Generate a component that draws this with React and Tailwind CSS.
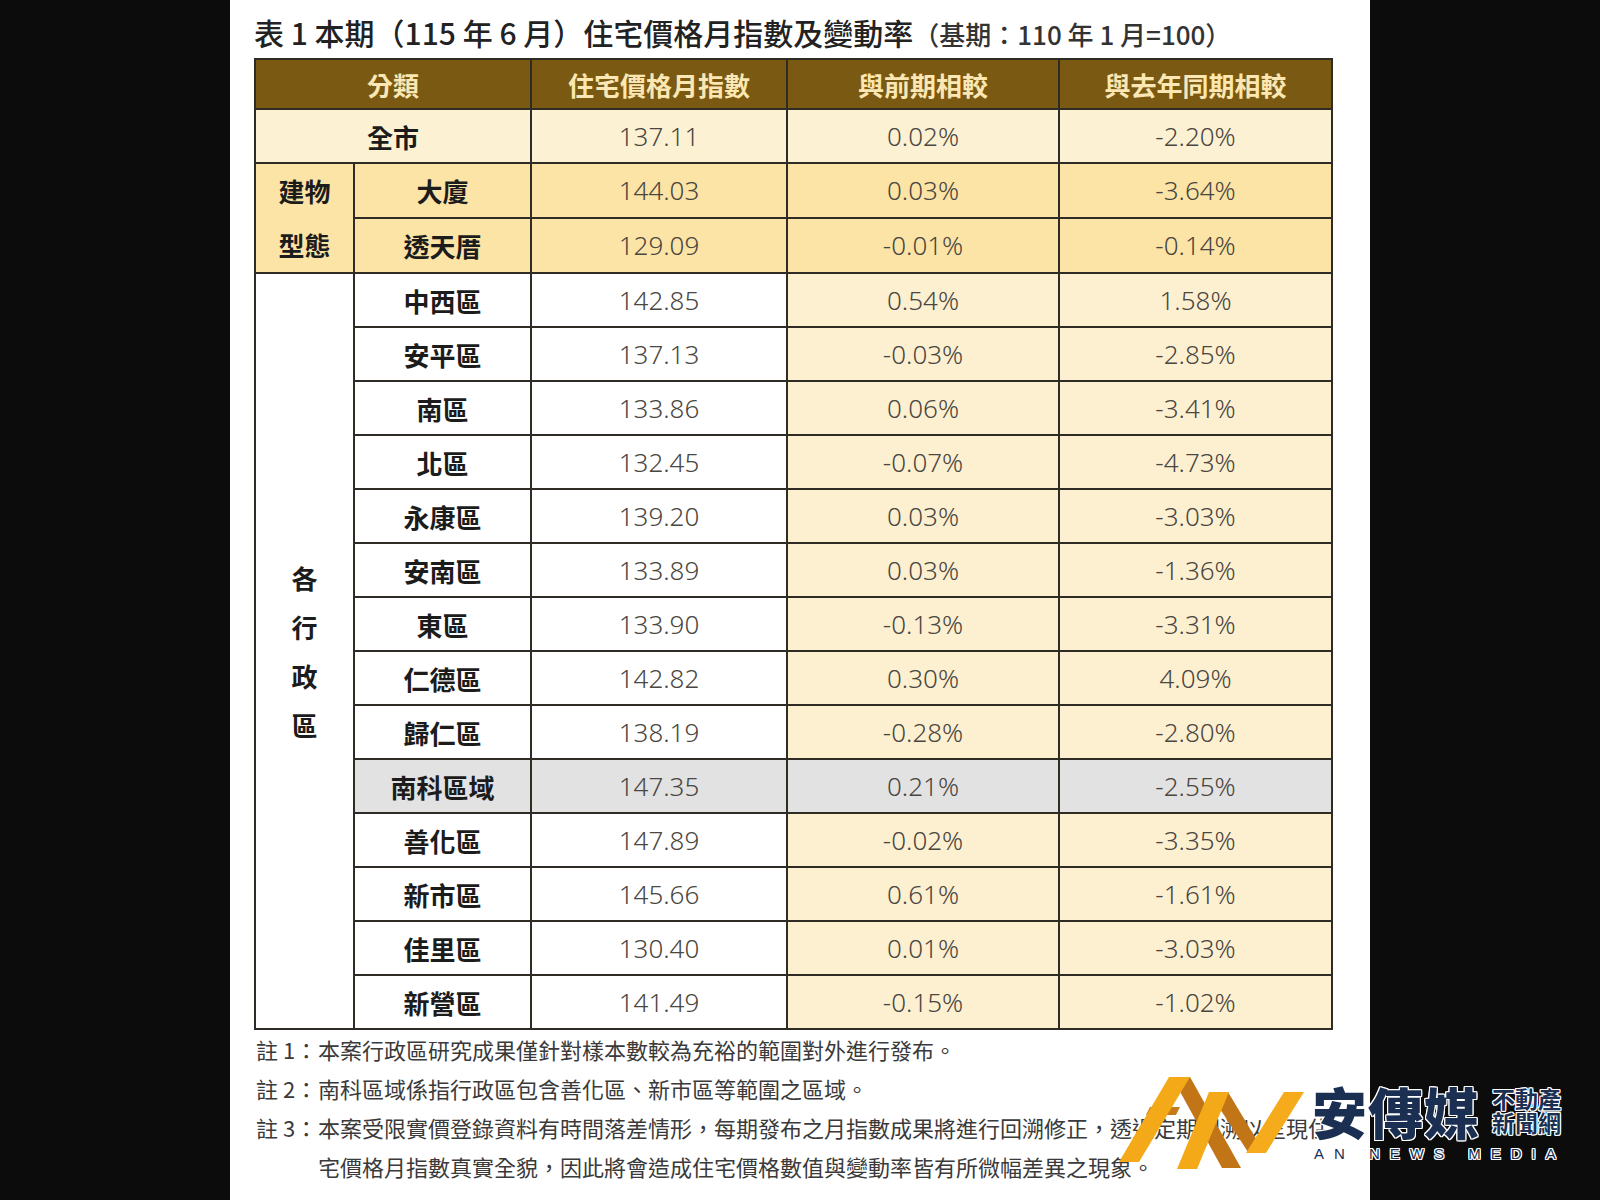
import React from 'react'

const districts = [
  ['中西區', '142.85', '0.54%', '1.58%'],
  ['安平區', '137.13', '-0.03%', '-2.85%'],
  ['南區', '133.86', '0.06%', '-3.41%'],
  ['北區', '132.45', '-0.07%', '-4.73%'],
  ['永康區', '139.20', '0.03%', '-3.03%'],
  ['安南區', '133.89', '0.03%', '-1.36%'],
  ['東區', '133.90', '-0.13%', '-3.31%'],
  ['仁德區', '142.82', '0.30%', '4.09%'],
  ['歸仁區', '138.19', '-0.28%', '-2.80%'],
  ['南科區域', '147.35', '0.21%', '-2.55%', true],
  ['善化區', '147.89', '-0.02%', '-3.35%'],
  ['新市區', '145.66', '0.61%', '-1.61%'],
  ['佳里區', '130.40', '0.01%', '-3.03%'],
  ['新營區', '141.49', '-0.15%', '-1.02%'],
]

const cell = 'border-2 border-[#2f2b25] text-center align-middle p-0'
const label = "font-['Noto_Sans_CJK_TC',sans-serif] font-bold text-[26px] text-[#1c1c1c]"
const num = "font-['Noto_Sans','Noto_Sans_CJK_TC',sans-serif] font-light text-[26px] text-[#4a4640]"

function Logo() {
  return (
    <div className="absolute left-[1110px] top-[1068px]">
      <svg width="200" height="112" viewBox="1110 1068 200 112">
        <polygon points="1172,1077 1190,1077 1241,1168 1222,1168" fill="#c27517" />
        <polygon points="1150,1107 1180,1107 1176,1115 1146,1115" fill="#c57a1b" />
        <polygon points="1119,1162 1139,1162 1190,1077 1169,1077" fill="#f4a918" />
        <polygon points="1209,1092 1228,1092 1264,1152 1248,1152" fill="#c27517" />
        <polygon points="1177,1169 1197,1169 1229,1092 1209,1092" fill="#f4a918" />
        <polygon points="1246,1153 1266,1153 1304,1092 1284,1092" fill="#f5ab1c" />
      </svg>
    </div>
  )
}

function LogoText() {
  const outline = '[text-shadow:1px_1px_0_#fff,-1px_-1px_0_#fff,1px_-1px_0_#fff,-1px_1px_0_#fff,0_1px_0_#fff,0_-1px_0_#fff,1px_0_0_#fff,-1px_0_0_#fff]'
  return (
    <div className="absolute left-[1312px] top-[1080px] flex flex-col">
      <div className="flex items-center gap-[12px]">
        <span className={`font-['Noto_Sans_CJK_TC',sans-serif] font-black text-[55px] leading-[60px] tracking-[1px] text-[#1a2f52] ${outline}`}>安傳媒</span>
        <div className={`flex flex-col font-['Noto_Sans_CJK_TC',sans-serif] font-bold text-[23px] leading-[24px] text-[#1a2f52] ${outline}`}>
          <span>不動產</span>
          <span>新聞網</span>
        </div>
      </div>
      <div className={`mt-[5px] ml-[2px] font-['Liberation_Sans',sans-serif] text-[15px] leading-[18px] tracking-[10px] text-[#1a2f52] whitespace-pre ${outline}`}>AN NEWS MEDIA</div>
    </div>
  )
}

export default function App() {
  return (
    <div className="relative w-[1600px] h-[1200px] bg-[#0c0c0c] flex justify-center overflow-hidden">
      <div className="w-[1140px] h-full bg-white pl-[24px] pt-[12px] font-['Noto_Sans_CJK_TC',sans-serif]">
        <div className="flex items-end h-[40px] text-[#222]">
          <span className="text-[30px] leading-[40px] font-medium">表 1 本期（115 年 6 月）住宅價格月指數及變動率</span>
          <span className="text-[26px] leading-[37px] font-medium text-[#333]">（基期：110 年 1 月=100）</span>
        </div>
        <table className="mt-[6px] table-fixed border-collapse border-2 border-[#2f2b25] w-[1077px]">
          <colgroup>
            <col className="w-[99px]" />
            <col className="w-[177px]" />
            <col className="w-[256px]" />
            <col className="w-[272px]" />
            <col className="w-[273px]" />
          </colgroup>
          <thead>
            <tr className="h-[50px] bg-[#7a5912]">
              <th colSpan={2} className={`${cell} font-bold text-[26px] text-[#fbe7b3]`}>分類</th>
              <th className={`${cell} font-bold text-[26px] text-[#fbe7b3]`}>住宅價格月指數</th>
              <th className={`${cell} font-bold text-[26px] text-[#fbe7b3]`}>與前期相較</th>
              <th className={`${cell} font-bold text-[26px] text-[#fbe7b3]`}>與去年同期相較</th>
            </tr>
          </thead>
          <tbody>
            <tr className="h-[54px] bg-[#fdf1d3]">
              <td colSpan={2} className={`${cell} ${label}`}>全市</td>
              <td className={`${cell} ${num}`}>137.11</td>
              <td className={`${cell} ${num}`}>0.02%</td>
              <td className={`${cell} ${num}`}>-2.20%</td>
            </tr>
            <tr className="h-[54px] bg-[#fce4a6]">
              <td rowSpan={2} className={`${cell} ${label}`}>
                <div className="flex flex-col leading-[54px]">
                  <span>建物</span>
                  <span>型態</span>
                </div>
              </td>
              <td className={`${cell} ${label}`}>大廈</td>
              <td className={`${cell} ${num}`}>144.03</td>
              <td className={`${cell} ${num}`}>0.03%</td>
              <td className={`${cell} ${num}`}>-3.64%</td>
            </tr>
            <tr className="h-[54px] bg-[#fce4a6]">
              <td className={`${cell} ${label}`}>透天厝</td>
              <td className={`${cell} ${num}`}>129.09</td>
              <td className={`${cell} ${num}`}>-0.01%</td>
              <td className={`${cell} ${num}`}>-0.14%</td>
            </tr>
            {districts.map(([name, idx, mom, yoy, gray], i) => (
              <tr key={name} className="h-[54px]">
                {i === 0 && (
                  <td rowSpan={districts.length} className={`${cell} ${label} bg-white`}>
                    <div className="flex flex-col items-center leading-[49px]">
                      <span>各</span>
                      <span>行</span>
                      <span>政</span>
                      <span>區</span>
                    </div>
                  </td>
                )}
                <td className={`${cell} ${label} ${gray ? 'bg-[#e3e2e2]' : 'bg-white'}`}>{name}</td>
                <td className={`${cell} ${num} ${gray ? 'bg-[#e3e2e2]' : 'bg-white'}`}>{idx}</td>
                <td className={`${cell} ${num} ${gray ? 'bg-[#e3e2e2]' : 'bg-[#fdf0d1]'}`}>{mom}</td>
                <td className={`${cell} ${num} ${gray ? 'bg-[#e3e2e2]' : 'bg-[#fdf0d1]'}`}>{yoy}</td>
              </tr>
            ))}
          </tbody>
        </table>
        <div className="text-[22px] leading-[39px] text-[#3a3a3a] pl-[2px]">
          <div className="flex">
            <span className="w-[62px] shrink-0 whitespace-pre">註 1：</span>
            <span>本案行政區研究成果僅針對樣本數較為充裕的範圍對外進行發布。</span>
          </div>
          <div className="flex">
            <span className="w-[62px] shrink-0 whitespace-pre">註 2：</span>
            <span>南科區域係指行政區包含善化區、新市區等範圍之區域。</span>
          </div>
          <div className="flex">
            <span className="w-[62px] shrink-0 whitespace-pre">註 3：</span>
            <div className="flex flex-col whitespace-nowrap">
              <span>本案受限實價登錄資料有時間落差情形，每期發布之月指數成果將進行回溯修正，透過定期回溯以呈現住</span>
              <span>宅價格月指數真實全貌，因此將會造成住宅價格數值與變動率皆有所微幅差異之現象。</span>
            </div>
          </div>
        </div>
      </div>
      <Logo />
      <LogoText />
    </div>
  )
}
